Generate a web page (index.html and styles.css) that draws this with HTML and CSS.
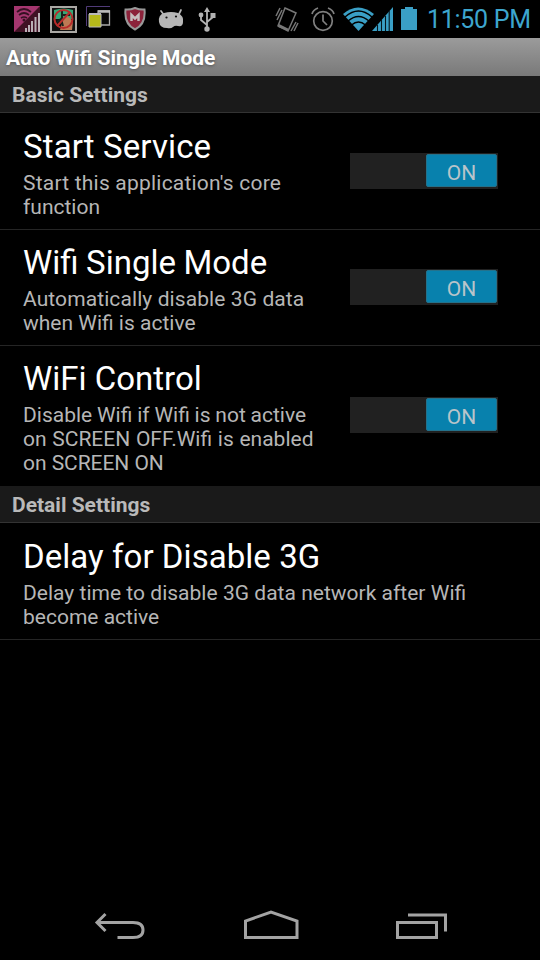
FILE: index.html
```
<!DOCTYPE html>
<html lang="en">
<head>
<meta charset="utf-8">
<title>Auto Wifi Single Mode</title>
<link rel="stylesheet" href="styles.css">
</head>
<body>
<div class="phone">
  <header class="status">
    <div class="status-icons notifications">
      <svg width="26" height="28" viewBox="0 0 26 28"><path d="M0 1h26v26H0z" fill="#401124"/><path d="M0 1h26L0 27z" fill="#a5366f"/><g fill="none" stroke="#351022" stroke-width="1.700"><path d="M3 7q7-6 14 0M5 10q5-4 10 0M7 13q3-2 6 0"/></g><circle cx="10" cy="15" r="1.500" fill="#351022"/><path d="M12 27v-4M15 27v-7M18 27V16M21.500 27V12M25 27V8" stroke="#b9afb5" stroke-width="2"/></svg>
      <svg width="27" height="28" viewBox="0 0 27 28"><path d="M1 2h25v25H1z" fill="#111" stroke="#aaa8a4" stroke-width="2"/><path d="M4 5q10-3 19 0v9H4z" fill="#35a875"/><path d="M13 15l4-4 6 5-1 9H10z" fill="#bd7954"/><path d="M12 5v10M7 17l4-3 2 7M13 10h7" stroke="#17231d" stroke-width="2" fill="none"/><circle cx="13.500" cy="14" r="9" fill="none" stroke="#b82b2b" stroke-width="2"/><path d="M20 7L7 21" stroke="#b82b2b" stroke-width="2"/></svg>
      <svg width="25" height="28" viewBox="0 0 25 28"><path d="M.5 21V1.500H24" fill="none" stroke="#513b79"/><path d="M12 6h11.500v14H12z" fill="#080808" stroke="#aaa" stroke-width="1.300"/><path d="M12 6.500h12" stroke="#bbb" stroke-width="2.500"/><path d="M3 9h12v13H3z" fill="#b5b91a" stroke="#bbb"/><path d="M3 9h12" stroke="#bbb" stroke-width="2"/></svg>
      <svg width="24" height="28" viewBox="0 0 24 28"><path d="M12 3q5 2 9.500 1.500Q23 19 12 24.500 1 19 2.500 4.500 7 5 12 3z" fill="#8c233b" stroke="#999" stroke-width="2"/><path d="M8.500 16V10l3.500 3.500 3.500-3.500v6" fill="none" stroke="#c6bfc0" stroke-width="2.500"/></svg>
      <svg width="26" height="28" viewBox="0 0 26 28"><path d="M3 6l3 4M23 5l-2 4" stroke="#b7b7b7" stroke-width="1.700" stroke-linecap="round"/><path d="M1 17Q0 10 6 8q7-2 14 0 6 3 5 9 0 5-5 4-3-1-5 1-2 2-6 1-7 0-8-6z" fill="#b7b7b7"/><circle cx="8.500" cy="12.500" r="1.100" fill="#111"/><circle cx="18" cy="11.500" r="1.100" fill="#111"/></svg>
      <svg width="18" height="28" viewBox="0 0 18 28"><path d="M9 24V5M9 20l-6-5V9M9 17l6-5V9" fill="none" stroke="#b2b2b2" stroke-width="1.800"/><path d="M9 2l3 5H6zM12.500 8h5v5h-5z" fill="#b2b2b2"/><circle cx="3" cy="10" r="2.400" fill="#b2b2b2"/><circle cx="9" cy="24" r="2.700" fill="#b2b2b2"/></svg>
    </div>
    <div class="status-icons system">
      <svg class="vibrate" width="24" height="28" viewBox="0 0 24 28"><g fill="none" stroke="#777" stroke-width="1.500"><path d="M10 3l11 5-8 18L3 21z"/><path d="M1 11l4-8M2 15l5-10M16 26l5-9M19 26l4-8"/></g><path d="M4 19l10 5-1 2-10-4z" fill="#777"/></svg>
      <svg class="alarm" width="24" height="28" viewBox="0 0 24 28"><g fill="none" stroke="#808080" stroke-width="1.700"><circle cx="12" cy="16" r="9.300"/><path d="M12 9.500V16l4 4M1 9q1-4 6-6M23 9q-1-4-6-6"/></g></svg>
      <svg class="wifi" width="31" height="28" viewBox="0 0 31 28"><path d="M0 9Q15-4 31 9L15.500 26z" fill="#3a9fc5"/><path d="M2 12Q15.500 0 29 12M5 16Q15.500 7 26 16M8.500 20Q15.500 14 22.500 20" fill="none" stroke="#000" stroke-width="1.500"/></svg>
      <svg class="signal" width="21" height="28" viewBox="0 0 21 28"><path d="M0 26L21 2v24z" fill="#3a9fc5"/><path d="M5.500 20v6M9.500 15v11M13.500 11v15M17.200 6v20" stroke="#04151d" stroke-width="1.100"/></svg>
      <svg class="battery" width="16" height="28" viewBox="0 0 16 28"><path d="M0 4h4V2h8v2h4v21H0z" fill="#3a9fc5"/></svg>
      <span class="clock">11:50 PM</span>
    </div>
  </header>
  <h1 class="app-title">Auto Wifi Single Mode</h1>
  <main class="settings">
    <h2 class="section">Basic Settings</h2>
    <section class="row">
      <div class="copy"><h3><span class="t1">Start Service</span></h3><p><span class="s1">Start this application's core</span><br><span>function</span></p></div>
      <div class="switch"><span class="thumb">ON</span></div>
    </section>
    <section class="row compact">
      <div class="copy"><h3><span class="t2">Wifi Single Mode</span></h3><p><span class="s3">Automatically disable 3G data</span><br><span>when Wifi is active</span></p></div>
      <div class="switch"><span class="thumb">ON</span></div>
    </section>
    <section class="row compact last">
      <div class="copy"><h3><span>WiFi Control</span></h3><p><span class="s5">Disable Wifi if Wifi is not active</span><br><span class="s6">on SCREEN OFF.Wifi is enabled</span><br><span class="s7">on SCREEN ON</span></p></div>
      <div class="switch"><span class="thumb">ON</span></div>
    </section>
    <h2 class="section">Detail Settings</h2>
    <section class="row">
      <div class="copy"><h3><span class="t4">Delay for Disable 3G</span></h3><p><span class="s8">Delay time to disable 3G data network after Wifi</span><br><span>become active</span></p></div>
    </section>
  </main>
  <nav class="navbar">
    <svg width="52" height="32" viewBox="0 0 52 32"><path d="M11.500 4L3 12.500l8.500 8.500M3 12.500h36q10 0 10 7.500T39 27.500H23.500" fill="none" stroke="#a3a3a3" stroke-width="3"/></svg>
    <svg width="56" height="32" viewBox="0 0 56 32"><path d="M2.500 27.500V11L28 2l26 9v16.500z" fill="none" stroke="#a3a3a3" stroke-width="3"/></svg>
    <svg width="52" height="32" viewBox="0 0 52 32"><path d="M1.500 12.500h39v15h-39zM12 5h37.500v16.500" fill="none" stroke="#a3a3a3" stroke-width="3"/></svg>
  </nav>
</div>
</body>
</html>
```
FILE: styles.css
```
* { box-sizing: border-box; }
body { margin: 0; background: #000; font-family: Roboto, sans-serif; }
h1, h2, h3, p { margin: 0; font-weight: 400; }
svg { display: block; flex: none; }
span { white-space: nowrap; }
.phone { width: 540px; height: 960px; display: flex; flex-direction: column; background: #000; overflow: hidden; }
.status { height: 38px; display: flex; justify-content: space-between; padding: 5px 9px 0 14px; flex: none; }
.status-icons { display: flex; }
.notifications { gap: 9.500px; }
.notifications svg:nth-child(n+4) { margin-left: 2px; }
.notifications svg:nth-child(6) { margin-left: 4px; }
.alarm { margin-left: 12px; }
.wifi { margin-left: 8px; }
.signal { margin-left: -2px; }
.battery { margin-left: 8px; }
.clock { width: 104px; margin-left: 10px; font-size: 25px; line-height: 30px; color: #3da6ce; letter-spacing: -.3px; }
.app-title { height: 38px; flex: none; padding-left: 6px; font-size: 21px; line-height: 40px; font-weight: 700; color: #fff; text-shadow: 0 1px 3px #555; background: linear-gradient(#9b9b9b, #797979); }
.section { height: 37px; padding-left: 12px; font-size: 21px; font-weight: 700; line-height: 38px; color: #b9b9b9; background: #1a1a1a; border-bottom: 1px solid #333; }
.row { display: flex; align-items: center; justify-content: space-between; padding: 0 42px 0 23px; border-bottom: 1px solid #252525; }
.copy { padding: 15px 0 10px; }
.compact .copy { padding-top: 14px; }
.row.last { border-bottom: 0; }
.last .copy { padding-bottom: 11px; }
.compact .switch { margin-bottom: 1px; }
.last .switch { margin-bottom: 2px; }
h3 { font-size: 33px; line-height: 38px; color: #fff; margin-bottom: 5px; }
p { font-size: 21px; line-height: 24px; color: #b6b6b6; }
.t1 { letter-spacing: .12px; }
.t2 { word-spacing: -.7px; }
.t4 { letter-spacing: .05px; }
.s1 { letter-spacing: .21px; }
.s3 { letter-spacing: .09px; }
.s5 { word-spacing: -.4px; }
.s6 { word-spacing: .5px; }
.s7 { letter-spacing: -.05px; }
.s8 { word-spacing: .1px; }
.switch { width: 148px; height: 36px; display: flex; justify-content: flex-end; padding: 1px 1px 2px; background: #212121; flex: none; }
.thumb { width: 71px; border: 1px solid #24728c; border-radius: 2px; background: #0881ad; color: #b8c4ca; font-size: 21px; line-height: 36px; text-align: center; }
.navbar { margin-top: auto; display: flex; justify-content: space-between; height: 50px; padding: 0 92px 0 94px; }
```
